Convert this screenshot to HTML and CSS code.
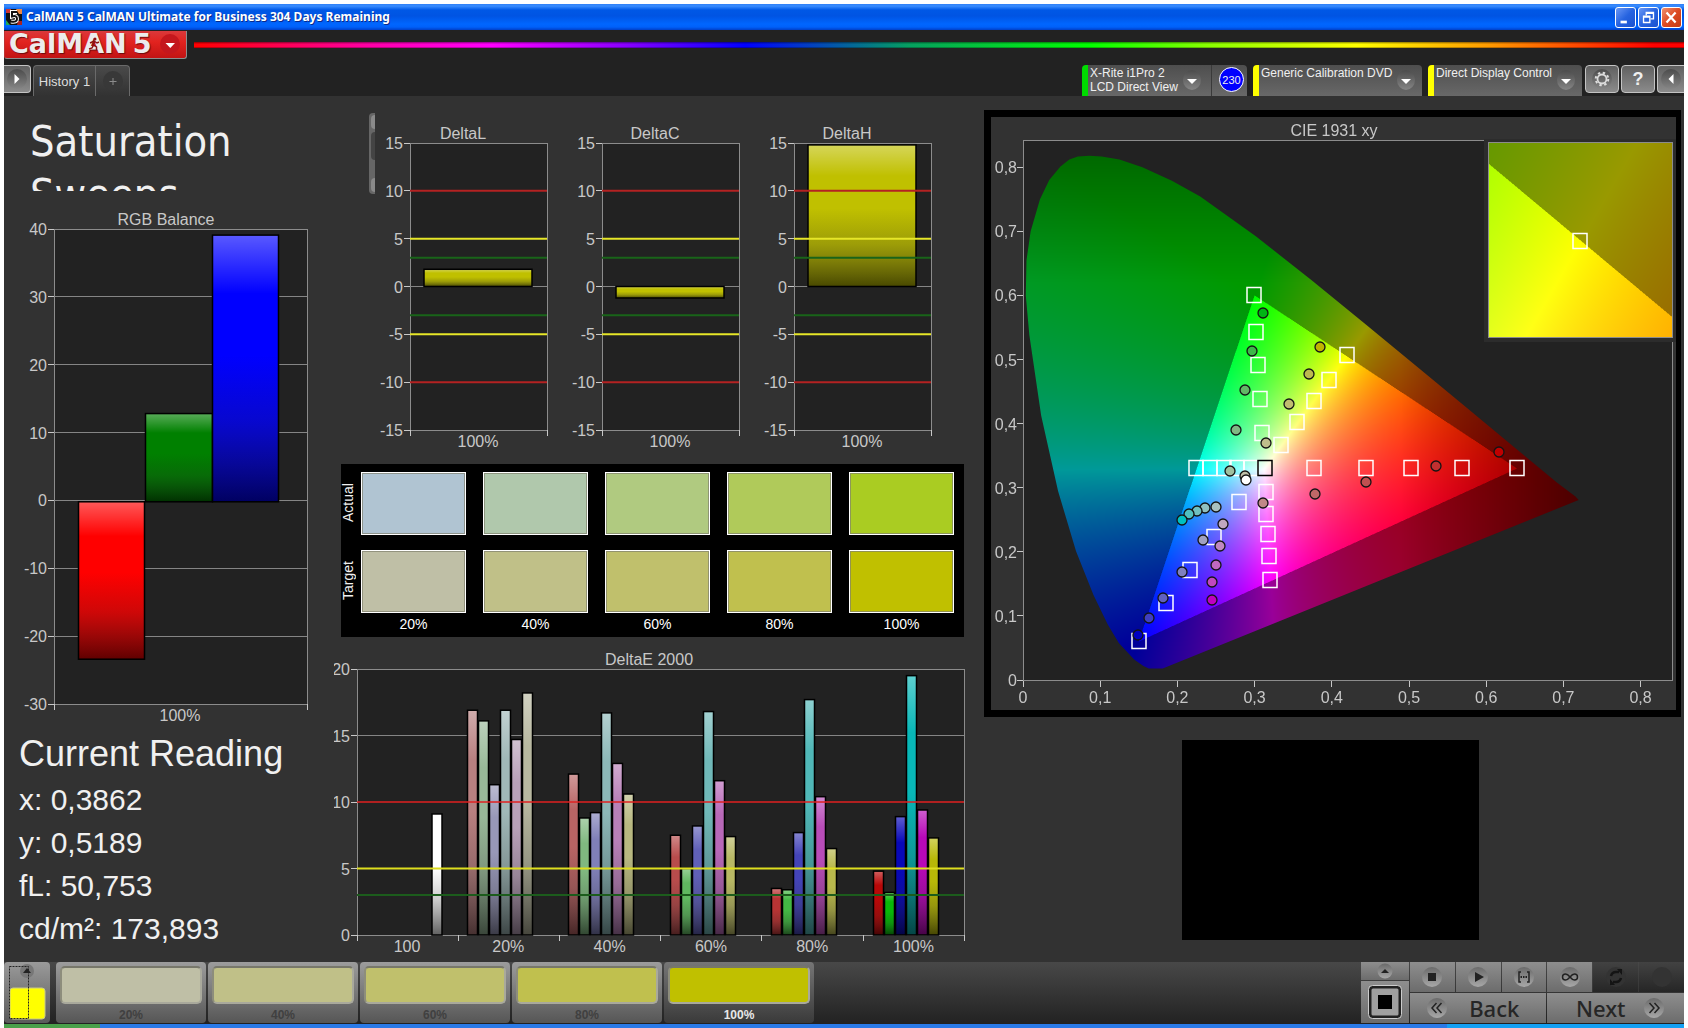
FILE: index.html
```html
<!DOCTYPE html>
<html lang="en">
<head>
<meta charset="utf-8">
<title>CalMAN 5 CalMAN Ultimate for Business 304 Days Remaining</title>
<link rel="stylesheet" href="styles.css">
</head>
<body>
<div class="window">
  <div class="titlebar">
    <svg class="app-icon" viewBox="0 0 16 16" aria-hidden="true">
      <rect width="16" height="16" fill="#111"/>
      <path d="M0 0h5v4H0z" fill="#c33"/><path d="M10 0h6v5h-3z" fill="#e84"/><path d="M0 11l4 5H0z" fill="#2a5"/><path d="M12 12h4v4h-5z" fill="#a22"/>
      <path d="M11 3H6v4.500q5-1.500 5 2.500q0 3.500-6 2.500" fill="none" stroke="#fff" stroke-width="4"/>
      <path d="M11 3H6v4.500q5-1.500 5 2.500q0 3.500-6 2.500" fill="none" stroke="#111" stroke-width="2"/>
    </svg>
    <span class="caption">CalMAN 5 CalMAN Ultimate for Business 304 Days Remaining</span>
    <div class="window-buttons">
      <button type="button" class="wb" aria-label="Minimize"><svg viewBox="0 0 21 21"><path d="M5 14h7v3H5z" fill="#fff"/></svg></button>
      <button type="button" class="wb" aria-label="Restore"><svg viewBox="0 0 21 21"><path d="M8 8V5h8v7h-3M8 6h8M5 9h7v7H5zM5 10h7" fill="none" stroke="#fff" stroke-width="1.500"/></svg></button>
      <button type="button" class="wb close" aria-label="Close"><svg viewBox="0 0 21 21"><path d="M5 5l10 11M15 5L5 16" stroke="#fff" stroke-width="2.500"/></svg></button>
    </div>
  </div>

  <header class="header">
    <div class="brand-row">
      <button type="button" class="brand">
        <span class="brand-name">CalMAN</span><span class="brand-five">5</span>
        <svg class="runner" viewBox="0 0 12 14" aria-hidden="true"><circle cx="7" cy="2" r="1.500" fill="#8d1111"/><path d="M6.500 4L5.500 8l3 2v3M5.500 8L4 11l-3 1M2 6l4-2 3 2 2-1" fill="none" stroke="#8d1111" stroke-width="1.500"/></svg>
        <svg class="brand-arrow" viewBox="0 0 20 20" aria-hidden="true"><circle cx="10" cy="10" r="10" fill="#c4171d"/><path d="M5.500 9h9.500l-4.700 5z" fill="#fff"/></svg>
      </button>
      <div class="rainbow"></div>
    </div>
    <div class="tab-row">
      <button type="button" class="square-btn side-left" aria-label="Expand left panel"><svg viewBox="0 0 20 20"><circle cx="10" cy="10" r="10" fill="url(#disc)"/><path d="M7.500 5v10l5-5z" fill="#fff"/></svg></button>
      <div class="history">
        <button type="button" class="history-tab">History 1</button>
        <button type="button" class="history-add" aria-label="Add tab"><svg viewBox="0 0 20 20"><circle cx="10" cy="10" r="10" fill="#383838"/><path d="M6.500 10.500h7M10 7v7" stroke="#8c8c8c"/></svg></button>
      </div>
      <div class="devices">
        <div class="device green">
          <button type="button" class="device-name"><span>X-Rite i1Pro 2<br>LCD Direct View</span><svg viewBox="0 0 18 20"><ellipse cx="9" cy="10" rx="9" ry="10" fill="url(#disc)"/><path d="M4 9h10l-5 5z" fill="#fff"/></svg></button>
          <button type="button" class="count">230</button>
        </div>
        <div class="device source">
          <button type="button" class="device-name"><span>Generic Calibration DVD</span><svg viewBox="0 0 18 20"><ellipse cx="9" cy="10" rx="9" ry="10" fill="url(#disc)"/><path d="M4 9h10l-5 5z" fill="#fff"/></svg></button>
        </div>
        <div class="device display">
          <button type="button" class="device-name"><span>Direct Display Control</span><svg viewBox="0 0 18 20"><ellipse cx="9" cy="10" rx="9" ry="10" fill="url(#disc)"/><path d="M4 9h10l-5 5z" fill="#fff"/></svg></button>
        </div>
        <button type="button" class="square-btn" aria-label="Settings"><svg viewBox="0 0 20 20"><circle cx="10" cy="10" r="10" fill="url(#disc)"/><circle cx="10" cy="10" r="4.500" fill="none" stroke="#ddd" stroke-width="1.800"/><circle cx="10" cy="10" r="6.300" fill="none" stroke="#ddd" stroke-width="2" stroke-dasharray="2.400 2.550"/></svg></button>
        <button type="button" class="square-btn help">?</button>
        <button type="button" class="square-btn side-right" aria-label="Expand right panel"><svg viewBox="0 0 20 20"><circle cx="10" cy="10" r="10" fill="url(#disc)"/><path d="M12.500 5v10l-5-5z" fill="#fff"/></svg></button>
      </div>
    </div>
  </header>

  <main class="workspace">
    <section class="col-left">
      <h1>Saturation Sweeps</h1>
      <svg id="rgb" class="chart" viewBox="4 200 330 530" role="img" aria-label="RGB Balance"></svg>
      <div class="reading">
        <h2>Current Reading</h2>
        <p>x: 0,3862</p>
        <p>y: 0,5189</p>
        <p>fL: 50,753</p>
        <p>cd/m²: 173,893</p>
      </div>
    </section>

    <section class="col-mid">
      <div class="deltas">
        <div class="scroll-stub"><i></i><b></b><i></i></div>
        <svg id="deltaL" class="chart" viewBox="0 113 192 344" role="img" aria-label="DeltaL"></svg>
        <svg id="deltaC" class="chart" viewBox="0 113 192 344" role="img" aria-label="DeltaC"></svg>
        <svg id="deltaH" class="chart" viewBox="0 113 192 344" role="img" aria-label="DeltaH"></svg>
      </div>
      <div class="swatches">
        <span class="row-name">Actual</span>
        <i class="a20"></i><i class="a40"></i><i class="a60"></i><i class="a80"></i><i class="a100"></i>
        <span class="row-name">Target</span>
        <i class="t20"></i><i class="t40"></i><i class="t60"></i><i class="t80"></i><i class="t100"></i>
        <span></span>
        <span class="pct">20%</span><span class="pct">40%</span><span class="pct">60%</span><span class="pct">80%</span><span class="pct">100%</span>
      </div>
      <svg id="deltaE" class="chart" viewBox="334 645 643 311" role="img" aria-label="DeltaE 2000"></svg>
    </section>

    <section class="col-right">
      <div class="cie">
        <canvas id="gamut" width="685" height="593"></canvas>
        <svg id="cie" class="chart" viewBox="991 117 685 593" role="img" aria-label="CIE 1931 xy"></svg>
      </div>
      <div class="video"></div>
    </section>
  </main>

  <footer class="footer">
    <button type="button" class="level" aria-label="Pattern">
      <svg viewBox="0 0 46 61">
        <circle cx="23" cy="9" r="7" fill="#777"/><path d="M19 11h8l-4-5z" fill="#222"/>
        <rect x="6" y="26" width="35" height="31" rx="3" fill="#ff0" stroke="#c8c88a"/>
        <path d="M5.500 4.500h19v52h-19z" fill="none" stroke="#222" stroke-dasharray="2 1"/>
      </svg>
    </button>
    <div class="steps">
      <button type="button" class="step"><i class="t20"></i>20%</button>
      <button type="button" class="step"><i class="t40"></i>40%</button>
      <button type="button" class="step"><i class="t60"></i>60%</button>
      <button type="button" class="step"><i class="t80"></i>80%</button>
      <button type="button" class="step current"><i class="t100"></i>100%</button>
    </div>
    <div class="transport">
      <div class="pattern">
        <button type="button" aria-label="Show"><svg viewBox="0 0 16 16"><circle cx="8" cy="8" r="7.500" fill="url(#knob)"/><path d="M4 10h8L8 6z" fill="#222"/></svg></button>
        <button type="button" class="window-pattern" aria-label="Window pattern"><svg viewBox="0 0 34 34"><rect x="2" y="2" width="30" height="30" rx="3" fill="#a0a0a0" stroke="#222" stroke-width="3"/><rect x=".5" y=".5" width="33" height="33" rx="4" fill="none" stroke="#ccc"/><path d="M10 10h14v14H10z" fill="#000"/></svg></button>
      </div>
      <div class="controls">
        <button type="button" aria-label="Stop"><svg viewBox="0 0 20 20"><circle cx="10" cy="10" r="10" fill="url(#knob)"/><path d="M6 6h8v8H6z" fill="#222"/></svg></button>
        <button type="button" aria-label="Play"><svg viewBox="0 0 20 20"><circle cx="10" cy="10" r="10" fill="url(#knob)"/><path d="M7 5v10l9-5z" fill="#222"/></svg></button>
        <button type="button" aria-label="Read series"><svg viewBox="0 0 20 20"><circle cx="10" cy="10" r="10" fill="url(#knob)"/><path d="M7 5H5v10h2M13 5h2v10h-2" fill="none" stroke="#222" stroke-width="1.500"/><path d="M6.500 10h7" stroke="#222" stroke-width="2" stroke-dasharray="1.500 1"/></svg></button>
        <button type="button" aria-label="Read continuously"><svg viewBox="0 0 20 20"><circle cx="10" cy="10" r="10" fill="url(#knob)"/><path d="M10 10C8 7.500 6.500 7 5.500 7a3 3 0 0 0 0 6c1 0 2.500-.5 4.500-3s3.500-3 4.500-3a3 3 0 0 1 0 6c-1 0-2.500-.5-4.500-3z" fill="none" stroke="#222" stroke-width="1.500"/></svg></button>
        <button type="button" class="off" aria-label="Refresh"><svg viewBox="0 0 20 20"><circle cx="10" cy="10" r="10" fill="#333"/><path d="M5 9q1-4 5-4h3M15 11q-1 4-5 4H7" fill="none" stroke="#141414" stroke-width="2.500"/><path d="M11 2h5v6zM9 18H4v-6z" fill="#141414"/></svg></button>
        <button type="button" class="off" aria-label="Record"><svg viewBox="0 0 20 20"><circle cx="10" cy="10" r="10" fill="#333"/></svg></button>
        <button type="button" class="nav"><svg viewBox="0 0 20 20"><circle cx="10" cy="10" r="10" fill="url(#knob)"/><path d="M9.500 5L5 10l4.500 5M14.500 5L10 10l4.500 5" fill="none" stroke="#222" stroke-width="1.500"/></svg><span>Back</span></button>
        <button type="button" class="nav next"><span>Next</span><svg viewBox="0 0 20 20"><circle cx="10" cy="10" r="10" fill="url(#knob)"/><path d="M5.500 5l4.500 5-4.500 5M10.500 5l4.500 5-4.500 5" fill="none" stroke="#222" stroke-width="1.500"/></svg></button>
      </div>
    </div>
  </footer>
</div>
<div class="taskbar"><i class="start"></i><i class="tray"></i></div>

<svg class="defs" aria-hidden="true">
  <defs>
    <linearGradient id="disc" x1="0" y1="0" x2="0" y2="1"><stop offset="0" stop-color="#4c4c4c"/><stop offset="1" stop-color="#858585"/></linearGradient>
    <linearGradient id="knob" x1="0" y1="0" x2="0" y2="1"><stop offset="0" stop-color="#6a6a6a"/><stop offset="1" stop-color="#a8a8a8"/></linearGradient>
    <linearGradient id="gloss" x1="0" y1="0" x2="0" y2="1">
      <stop offset="0" stop-color="#fff" stop-opacity=".35"/><stop offset=".22" stop-color="#fff" stop-opacity="0"/>
      <stop offset=".45" stop-color="#222" stop-opacity="0"/><stop offset=".7" stop-color="#222" stop-opacity=".22"/><stop offset="1" stop-color="#000" stop-opacity=".62"/>
    </linearGradient>
  </defs>
</svg>
<script src="script.js"></script>
</body>
</html>
```

FILE: styles.css
```css
* { box-sizing: border-box; }

body {
  margin: 0;
  padding: 4px 4px 0;
  min-height: 100vh;
  display: flex;
  flex-direction: column;
  background: #fff;
  color: #f0f0f0;
  font-family: "Liberation Sans", Arial, sans-serif;
}

button {
  margin: 0;
  padding: 0;
  border: 0;
  background: none;
  color: inherit;
  font: inherit;
}

svg { display: block; }
.defs { position: absolute; width: 0; height: 0; }

.window {
  flex: 1;
  display: flex;
  flex-direction: column;
  background: #323232;
}

/* title bar */
.titlebar {
  display: flex;
  align-items: center;
  height: 26px;
  padding: 0 2px;
  background: linear-gradient(#2f7ff5 0, #3a8dff 2px, #0058e6 6px, #0054e3 12px, #0066ff 20px, #0061fa 23px, #003fc8 26px);
}
.app-icon { width: 16px; height: 16px; }
.caption {
  flex: 1;
  padding-left: 4px;
  font: bold 12px/24px "Noto Sans", sans-serif;
  white-space: nowrap;
  color: #fff;
  text-shadow: 1px 1px 0 #0a2a8a;
}
.window-buttons { display: flex; gap: 2px; }
.wb {
  width: 21px;
  height: 21px;
  border: 1px solid #fff;
  border-radius: 3px;
  background: linear-gradient(135deg, #6b98f5, #2663e0 50%, #1c52cf);
}
.wb svg { width: 19px; height: 19px; }
.close { background: linear-gradient(135deg, #f0906f, #dc4a22 50%, #c33a14); }

/* header */
.header { background: #222; }
.brand-row { display: flex; align-items: center; height: 35px; padding-bottom: 6px; gap: 7px; }
.brand {
  position: relative;
  display: flex;
  align-items: center;
  width: 183px;
  height: 28px;
  padding-left: 4px;
  border: 1px solid #8d8d8d;
  border-top: 0;
  border-left-color: #b33;
  border-radius: 0 0 3px 3px;
  background: linear-gradient(#d9393b, #e2231f 40%, #c21414);
  font: bold 27px/26px "DejaVu Sans", sans-serif;
  color: #ececec;
  text-shadow: 1px 1px 1px #6d0c0c;
}
.brand-name { padding-bottom: 1px; }
.brand-five { padding: 0 0 1px 6px; }
.runner { position: absolute; left: 83px; top: 6px; width: 12px; height: 14px; }
.brand-arrow { width: 20px; height: 20px; margin-left: 9px; }
.rainbow {
  flex: 1;
  height: 6px;
  background:
    linear-gradient(rgba(0,0,0,.45), transparent 35%, transparent 75%, rgba(0,0,0,.4)),
    linear-gradient(90deg, #f00 0, #f0a 12%, #f0f 20%, #80f 29%, #00f 37%, #06a060 48%, #0f0 60%, #8f0 68%, #ff0 78%, #f90 87%, #f00 98%);
}
.tab-row { display: flex; align-items: flex-end; height: 31px; }
.square-btn {
  display: flex;
  align-items: center;
  justify-content: center;
  width: 34px;
  height: 28px;
  margin-bottom: 3px;
  border: 1px solid #c4c4c4;
  border-radius: 4px;
  background: linear-gradient(#606060, #8b8b8b);
}
.square-btn svg { width: 20px; height: 20px; }
.side-left { width: 27px; border-left: 0; border-radius: 0 4px 4px 0; }
.side-right { width: 27px; border-right: 0; border-radius: 4px 0 0 4px; }
.help { font: bold 18px/20px "Liberation Sans", sans-serif; }
.history {
  display: flex;
  height: 31px;
  margin-left: 2px;
  border: 1px solid #6a6a6a;
  border-bottom: 0;
  border-radius: 4px 4px 0 0;
  background: linear-gradient(#4a4a4a, #323232);
}
.history-tab { width: 62px; border-right: 1px solid #6a6a6a; font-size: 13px; color: #ddd; }
.history-add { width: 33px; display: grid; place-items: center; }
.history-add svg { width: 20px; height: 20px; }
.devices { flex: 1; display: flex; justify-content: flex-end; gap: 2px; }
.device {
  display: flex;
  height: 31px;
  border-left: 6px solid #ff0;
  border-radius: 4px 4px 0 0;
  background: linear-gradient(#4e4e4e, #686868);
  font-size: 12px;
  line-height: 14px;
  color: #f0f0f0;
}
.green { width: 165px; margin-right: 4px; border-left-color: #00dc00; }
.source { width: 169px; margin-right: 4px; }
.display { width: 154px; margin-right: 1px; }
.device-name { flex: 1; display: flex; justify-content: space-between; align-items: flex-start; padding: 1px 7px 0 2px; text-align: left; white-space: nowrap; }
.device-name svg { width: 18px; height: 20px; margin-top: 4px; }
.green .device-name { padding-right: 10px; border-right: 1px solid #3a3a3a; }
.count {
  width: 25px;
  height: 25px;
  margin: 2px 3px 0 7px;
  border: 1px solid #fff;
  border-radius: 50%;
  background: #00f;
  font-size: 11px;
}

/* workspace */
.workspace {
  flex: 1;
  display: grid;
  grid-template-columns: minmax(0, 330fr) minmax(0, 643fr) minmax(0, 707fr);
  align-items: start;
}
.chart { width: 100%; height: auto; }
.chart text { font: 16px "Liberation Sans", Arial, sans-serif; fill: #c8c8c8; }
.mid-text { text-anchor: middle; }
.end-text { text-anchor: end; }
.grid-line { stroke: #858585; shape-rendering: crispEdges; }
.tick { stroke: #c8c8c8; shape-rendering: crispEdges; }
.plot { fill: #222; stroke: #8c8c8c; shape-rendering: crispEdges; }

h1 {
  height: 95px;
  margin: 0 0 9px;
  padding: 19px 40px 0 26px;
  overflow: hidden;
  font: normal condensed 43px/53px "DejaVu Sans Condensed", "DejaVu Sans", sans-serif;
}
.reading { padding: 2px 0 0 15px; }
h2 { margin: 0 0 3px; font-size: 36px; line-height: 43px; font-weight: normal; }
.reading p { margin: 0; font-size: 30px; line-height: 43px; }

.deltas { display: flex; align-items: flex-start; margin: 17px 25px 0 35px; }
.deltas .chart { flex: 1; min-width: 0; }
.scroll-stub {
  width: 6px;
  height: 81px;
  margin-right: 1px;
  padding: 2px 0 2px 2px;
  display: flex;
  flex-direction: column;
  gap: 3px;
  border-radius: 4px 0 0 4px;
  background: #666;
}
.scroll-stub i { height: 14px; border-radius: 4px 0 0 4px; background: #8a8a8a; }
.scroll-stub b { height: 28px; margin-bottom: auto; border-radius: 6px 0 0 6px; background: #444; }

.swatches {
  display: grid;
  grid-template-columns: 3px repeat(5, minmax(0, 1fr));
  grid-template-rows: 74px 63px 15px;
  gap: 4px 17px;
  margin: 7px 13px 8px 7px;
  padding: 8px 10px 5px 0;
  background: #000;
  font-size: 14px;
  line-height: 14px;
}
.swatches i { height: 63px; border: 1px solid #fff; box-shadow: inset 0 0 0 1px rgba(128, 128, 110, .7); }
.row-name { width: 14px; height: 62px; writing-mode: vertical-rl; transform: rotate(180deg); text-align: center; }
.pct { text-align: center; color: #fff; }

.a20 { background: #b0c4d2; }
.a40 { background: #b0c8ac; }
.a60 { background: #b0ca80; }
.a80 { background: #b0ca5a; }
.a100 { background: #aacc22; }
.t20 { background: #bfbfa6; }
.t40 { background: #c0c088; }
.t60 { background: #c0c06c; }
.t80 { background: #c0c04e; }
.t100 { background: #c0c000; }

.cie { display: grid; margin: 14px 3px 0 7px; border: solid #000; border-width: 7px 5px 7px 7px; background: #323232; }
.cie > * { grid-area: 1 / 1; width: 100%; }
#cie .plot { fill: none; }
.target { fill: none; stroke: #fff; stroke-width: 1.5; }
.white-target { stroke: #000; }
.sample { stroke: #141414; stroke-width: 1.3; }
.video { width: 42%; aspect-ratio: 294 / 198; margin: 23px auto 0; background: #000; }

/* footer */
.footer { display: flex; padding-bottom: 1px; background: linear-gradient(#484848, #222); }
.level { width: 46px; height: 61px; border-radius: 4px; background: linear-gradient(#9a9a9a, #5a5a5a); }
.steps { display: flex; gap: 2px; margin-left: 6px; }
.step {
  width: 150px;
  height: 61px;
  padding: 4px;
  border-radius: 4px;
  background: linear-gradient(#9c9c9c, #565656);
  font-size: 12px;
  line-height: 15px;
  font-weight: bold;
  color: #404040;
}
.step i { display: block; height: 38px; margin-bottom: 4px; border: 2px solid #8d8d7c; border-color: #77776a #a9a99c #a9a99c #8d8d7c; border-radius: 5px; }
.current { background: linear-gradient(#767676, #3a3a3a); color: #e8e8e8; }
.transport { display: flex; gap: 1px; margin-left: auto; width: 323px; }
.transport button { display: flex; align-items: center; justify-content: center; background: linear-gradient(#8e8e8e, #6c6c6c); }
.pattern { width: 48px; display: grid; grid-template-rows: 18px 42px; gap: 1px; }
.pattern svg { width: 16px; height: 16px; }
.pattern .window-pattern svg { width: 34px; height: 34px; }
.controls { flex: 1; display: grid; grid-template-columns: repeat(6, 1fr); grid-template-rows: 30px 30px; gap: 1px; }
.controls svg { width: 20px; height: 20px; }
.controls .off { background: linear-gradient(#424242, #262626); }
.controls .nav { grid-column: span 3; gap: 22px; padding-right: 10px; font: 500 22px/30px "Noto Sans", sans-serif; color: #262626; }
.controls .nav svg { flex: none; }
.controls .next { gap: 18px; padding: 0 0 0 8px; }

.taskbar { display: flex; justify-content: space-between; height: 4px; background: #2a7ae8; }
.start { width: 96px; background: #4aa04a; }
.tray { width: 237px; background: #14a0f4; }
```

FILE: script.js
```js
const NS = 'http://www.w3.org/2000/svg';

function add(parent, name, attrs, text) {
  const node = document.createElementNS(NS, name);
  for (const key in attrs) node.setAttribute(key, attrs[key]);
  if (text !== undefined) node.textContent = text;
  parent.appendChild(node);
  return node;
}

function line(svg, x1, y1, x2, y2, cls) {
  add(svg, 'line', { x1, y1, x2, y2, class: cls });
}

function bar(svg, x, y, w, h, color) {
  add(svg, 'rect', { x, y, width: w, height: h, fill: color });
  add(svg, 'rect', { x, y, width: w, height: h, fill: 'url(#gloss)', stroke: '#000', 'stroke-width': 1.5 });
}

function frame(svg, o) {
  add(svg, 'text', { x: o.titleX, y: o.top - 4, class: 'mid-text' }, o.title);
  add(svg, 'rect', { x: o.left, y: o.top, width: o.right - o.left, height: o.bottom - o.top, class: 'plot' });
  const scale = (o.bottom - o.top) / (o.max - o.min);
  const y = v => o.bottom - (v - o.min) * scale;
  for (let v = o.min; v <= o.max; v += o.step) {
    if (o.lines.includes(v)) line(svg, o.left, y(v), o.right, y(v), 'grid-line');
    line(svg, o.left - 6, y(v), o.left, y(v), 'tick');
    add(svg, 'text', { x: o.left - 7, y: y(v) + 6, class: 'end-text' }, v);
  }
  return y;
}

function limits(svg, o, y, list) {
  for (const [v, color] of list)
    add(svg, 'line', { x1: o.left, x2: o.right, y1: y(v), y2: y(v), stroke: color, 'stroke-width': 2 });
}

// RGB balance
{
  const svg = document.getElementById('rgb');
  const o = { title: 'RGB Balance', titleX: 166, left: 54, right: 307, top: 229, bottom: 704, min: -30, max: 40, step: 10, lines: [-20, -10, 0, 10, 20, 30] };
  const y = frame(svg, o);
  bar(svg, 78.5, y(-0.2), 66, y(-23.400) - y(-0.2), '#f00');
  bar(svg, 145.5, y(12.8), 67, y(-0.2) - y(12.8), '#008000');
  bar(svg, 212.5, y(39.1), 66, y(-0.2) - y(39.1), '#00f');
  for (const x of [o.left, o.right]) line(svg, x, 704, x, 710, 'tick');
  add(svg, 'text', { x: 180, y: 721, class: 'mid-text' }, '100%');
}

// lightness, chroma and hue differences
for (const [id, value] of [['deltaL', 1.8], ['deltaC', -1.2], ['deltaH', 14.8]]) {
  const svg = document.getElementById(id);
  const o = { title: 'Delta' + id.slice(-1), titleX: 87, left: 34, right: 171, top: 143, bottom: 430, min: -15, max: 15, step: 5, lines: [0] };
  const y = frame(svg, o);
  const top = y(Math.max(0, value));
  bar(svg, 48, top, 108, Math.abs(y(value) - y(0)), '#c0c000');
  limits(svg, o, y, [[10, '#b42222'], [-10, '#b42222'], [5, '#e6e628'], [-5, '#e6e628'], [3, '#196419'], [-3, '#196419']]);
  for (const x of [o.left, o.right]) line(svg, x, 430, x, 436, 'tick');
  add(svg, 'text', { x: 102, y: 447, class: 'mid-text' }, '100%');
}

// DeltaE 2000
{
  const svg = document.getElementById('deltaE');
  const o = { title: 'DeltaE 2000', titleX: 649, left: 357, right: 964, top: 669, bottom: 935, min: 0, max: 20, step: 5, lines: [15] };
  const y = frame(svg, o);
  const groups = [
    [467, [16.9, 16.1, 11.3, 16.9, 14.7, 18.2], ['#b88080', '#98b898', '#9898b8', '#a0b8b8', '#b8a0b8', '#b8b8a0']],
    [568, [12.1, 8.8, 9.2, 16.7, 12.9, 10.6], ['#b86464', '#80b880', '#8080b8', '#8cb8b8', '#b880b8', '#b8b880']],
    [670, [7.5, 5, 8.2, 16.8, 11.6, 7.4], ['#b84c4c', '#60b860', '#6060b8', '#70b8b8', '#b868b8', '#b8b864']],
    [771, [3.5, 3.4, 7.7, 17.7, 10.4, 6.5], ['#b83434', '#44b844', '#4444b8', '#50b8b8', '#b84cb8', '#b8b84c']],
    [873, [4.8, 3.2, 8.9, 19.5, 9.4, 7.3], ['#b80808', '#08b808', '#0808b8', '#08b8b8', '#b808b8', '#b8b808']]
  ];
  bar(svg, 432, y(9.1), 10, y(0) - y(9.1), '#fff');
  for (const [x, values, colors] of groups)
    values.forEach((v, i) => bar(svg, x + 0.5 + i * 11, y(v), 10, y(0) - y(v), colors[i]));
  limits(svg, o, y, [[5, '#dede1e'], [3, '#1c5c1c']]);
  add(svg, 'line', { x1: o.left, x2: o.right, y1: y(10), y2: y(10), stroke: '#e02020', 'stroke-opacity': 0.75, 'stroke-width': 2 });
  ['100', '20%', '40%', '60%', '80%', '100%'].forEach((t, i) =>
    add(svg, 'text', { x: 407 + i * 101.3, y: 952, class: 'mid-text' }, t));
  for (let i = 0; i <= 6; i++) line(svg, 357 + i * 101.2, 935, 357 + i * 101.2, 941, 'tick');
}

// CIE chart: axes and markers
{
  const svg = document.getElementById('cie');
  add(svg, 'text', { x: 1334, y: 136, class: 'mid-text' }, 'CIE 1931 xy');
  add(svg, 'path', { d: 'M1484 140.500H1023V680H1672V342', class: 'plot' });
  add(svg, 'rect', { x: 1488, y: 142.500, width: 184, height: 195, class: 'plot' });
  for (let i = 0; i <= 8; i++) {
    const label = i ? '0,' + i : '0';
    const x = 1023 + i * 77.2, y = 680 - i * 64.1;
    line(svg, x, 681, x, 687, 'tick');
    line(svg, 1017, y, 1023, y, 'tick');
    add(svg, 'text', { x, y: 703, class: 'mid-text' }, label);
    add(svg, 'text', { x: 1017, y: y + 6, class: 'end-text' }, label);
  }
  const targets = [
    [1254, 295], [1256, 332], [1258, 365], [1260, 399], [1262, 433],
    [1347, 355], [1329, 380], [1314, 401], [1297, 422], [1281, 445],
    [1196, 468], [1210, 468], [1224, 468], [1237, 468], [1251, 468],
    [1314, 468], [1366, 468], [1411, 468], [1462, 468], [1517, 468],
    [1266, 492], [1266, 514], [1268, 534], [1269, 556], [1270, 580],
    [1239, 502], [1214, 537], [1190, 570], [1166, 603], [1139, 641], [1580, 241]
  ];
  for (const [x, y] of targets) add(svg, 'rect', { x: x - 7, y: y - 7.5, width: 14, height: 15, class: 'target' });
  add(svg, 'rect', { x: 1258, y: 460.5, width: 14, height: 15, class: 'target white-target' });
  const samples = [
    [1263, 313, '#00b414'], [1252, 351, '#3cb848'], [1245, 390, '#62b866'], [1236, 430, '#80b884'],
    [1320, 347, '#c0b400'], [1309, 374, '#bcb850'], [1289, 404, '#c0bc70'], [1266, 443, '#c0be8c'],
    [1230, 471, '#a0c0a0'], [1245, 476, '#c0c0a8'], [1246, 480, '#fff'],
    [1216, 507, '#a8c0c0'], [1205, 508, '#90c0c0'], [1197, 511, '#70c0c0'], [1189, 514, '#50c0c0'], [1182, 520, '#00c0c0'],
    [1223, 524, '#c0a8c0'], [1220, 546, '#c088c0'], [1216, 565, '#c068c0'], [1212, 582, '#c048c0'], [1212, 600, '#c000c0'],
    [1203, 540, '#a0a0c0'], [1182, 572, '#8080c0'], [1163, 598, '#6060c0'], [1149, 618, '#4040c0'], [1138, 635, '#0000c0'],
    [1263, 503, '#c08888'], [1315, 494, '#c06868'], [1366, 482, '#c05050'], [1436, 466, '#c03030'], [1499, 452, '#c00000']
  ];
  for (const [cx, cy, fill] of samples) add(svg, 'circle', { cx, cy, r: 5, fill, class: 'sample' });
}

// CIE chart: chromaticity shading
{
  const canvas = document.getElementById('gamut');
  const ctx = canvas.getContext('2d');
  const R = [0.64, 0.33], G = [0.3, 0.6], B = [0.15, 0.06];
  const side = (a, b, x, y) => (b[0] - a[0]) * (y - a[1]) - (b[1] - a[1]) * (x - a[0]);
  const inside = (x, y) => side(R, G, x, y) >= 0 && side(G, B, x, y) >= 0 && side(B, R, x, y) >= 0;

  function shade(w, h, toXY) {
    const layer = document.createElement('canvas');
    layer.width = w;
    layer.height = h;
    const c = layer.getContext('2d');
    const img = c.createImageData(w, h);
    for (let j = 0; j < h; j++) for (let i = 0; i < w; i++) {
      const [x, y] = toXY(i + 0.5, j + 0.5);
      const z = 1 - x - y;
      const rgb = [
        3.2406 * x - 1.5372 * y - 0.4986 * z,
        -0.9689 * x + 1.8758 * y + 0.0415 * z,
        0.0557 * x - 0.204 * y + 1.057 * z
      ].map(v => Math.max(0, v));
      const peak = Math.max(...rgb);
      let dim = inside(x, y) ? 1 : 0.6;
      dim *= 1 - Math.max(0, x - 0.49) * 2.2;
      dim *= 1 - Math.max(0, y - 0.62) * 1.6;
      const at = (j * w + i) * 4;
      for (let k = 0; k < 3; k++) img.data[at + k] = 255 * dim * rgb[k] / peak;
      img.data[at + 3] = 255;
    }
    c.putImageData(img, 0, 0);
    return layer;
  }

  ctx.fillStyle = '#222';
  ctx.fillRect(32, 24, 649, 539);
  const locus = [
    [.181, .018], [.163, .018], [.156, .022], [.144, .032], [.1241, .0578], [.1096, .0868], [.0913, .1327],
    [.0687, .2007], [.0454, .295], [.0235, .4127], [.0082, .5384], [.0036, .6], [.0045, .655], [.0099, .7],
    [.022, .75], [.034, .78], [.0485, .801], [.06, .812], [.071, .8165], [.086, .818], [.102, .8165],
    [.125, .812], [.1547, .8], [.1929, .779], [.2296, .7543], [.3016, .6923], [.3731, .6245], [.4441, .5547],
    [.5125, .4866], [.5752, .4242], [.627, .3725], [.6915, .3083], [.716, .286], [.7197, .281]
  ];
  ctx.save();
  ctx.beginPath();
  for (const [x, y] of locus) ctx.lineTo(32 + 772 * x, 563 - 641 * y);
  ctx.clip();
  ctx.drawImage(shade(1370, 1186, (i, j) => [(i / 2 - 32) / 772, (563 - j / 2) / 641]), 0, 0, 685, 593);
  ctx.restore();

  // magnified view round the current target
  ctx.fillStyle = '#2c2c2c';
  ctx.fillRect(493, 22, 192, 203);
  ctx.drawImage(shade(368, 390, (i, j) => [.419 + (i / 2 - 92) / 3400, .5055 - (j / 2 - 98) / 3577]), 497, 25, 184, 195);
}
```
